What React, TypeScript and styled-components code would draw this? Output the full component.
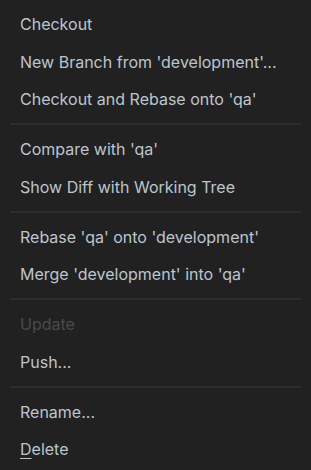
import React from "react";
import styled, { createGlobalStyle } from "styled-components";

const Global = createGlobalStyle`
  html, body { margin: 0; padding: 0; background: #212121; }
  body { font-family: Inter, "Open Sans", sans-serif; }
`;

const Menu = styled.div`
  width: 311px;
  height: 470px;
  box-sizing: border-box;
  background: #212121;
  padding: 5.5px 0 0;
  display: flex;
  flex-direction: column;
`;

const Item = styled.div<{ $disabled?: boolean }>`
  height: 37.5px;
  display: flex;
  align-items: center;
  padding-left: 20px;
  font-size: 16px;
  color: ${(p) => (p.$disabled ? "#4a4a4a" : "#bcc5ce")};
  white-space: nowrap;
`;

const Separator = styled.div`
  height: 2px;
  margin: 5.25px 10px;
  background: #2d2d2d;
`;

const Mnemonic = styled.span`
  text-decoration: underline;
  text-underline-offset: 3px;
`;

export default function App() {
  return (
    <>
      <Global />
      <Menu>
        <Item>Checkout</Item>
        <Item>New Branch from 'development'...</Item>
        <Item>Checkout and Rebase onto 'qa'</Item>
        <Separator />
        <Item>Compare with 'qa'</Item>
        <Item>Show Diff with Working Tree</Item>
        <Separator />
        <Item>Rebase 'qa' onto 'development'</Item>
        <Item>Merge 'development' into 'qa'</Item>
        <Separator />
        <Item $disabled>Update</Item>
        <Item>Push...</Item>
        <Separator />
        <Item>Rename...</Item>
        <Item>
          <Mnemonic>D</Mnemonic>elete
        </Item>
      </Menu>
    </>
  );
}
